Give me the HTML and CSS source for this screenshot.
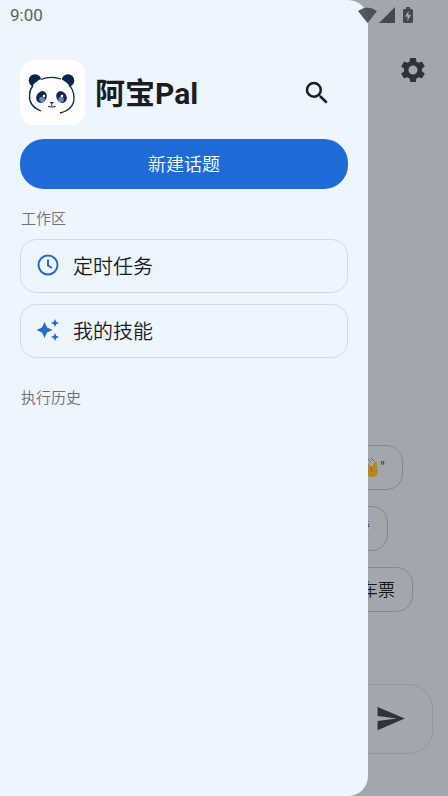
FILE: index.html
```html
<!DOCTYPE html>
<html lang="zh-CN">
<head>
<meta charset="utf-8">
<meta name="viewport" content="width=device-width, initial-scale=1">
<title>阿宝Pal</title>
<link rel="stylesheet" href="styles.css">
</head>
<body>
<div class="app">
  <main class="chat">
    <header class="chat-header">
      <button class="icon-button" type="button" aria-label="设置">
        <svg width="30" height="30" viewBox="0 0 24 24" fill="currentColor"><path d="M19.14 12.94c.04-.3.06-.61.06-.94 0-.32-.02-.64-.07-.94l2.03-1.58c.18-.14.23-.41.12-.61l-1.92-3.32c-.12-.22-.37-.29-.59-.22l-2.39.96c-.5-.38-1.03-.7-1.62-.94l-.36-2.54c-.04-.24-.24-.41-.48-.41h-3.84c-.24 0-.43.17-.47.41l-.36 2.54c-.59.24-1.13.57-1.62.94l-2.39-.96c-.22-.08-.47 0-.59.22L2.74 8.87c-.12.21-.08.47.12.61l2.03 1.58c-.05.3-.09.63-.09.94s.02.64.07.94l-2.03 1.58c-.18.14-.23.41-.12.61l1.92 3.32c.12.22.37.29.59.22l2.39-.96c.5.38 1.03.7 1.62.94l.36 2.54c.05.24.24.41.48.41h3.84c.24 0 .44-.17.47-.41l.36-2.54c.59-.24 1.13-.56 1.62-.94l2.39.96c.22.08.47 0 .59-.22l1.92-3.32c.12-.22.07-.47-.12-.61l-2.01-1.58zM12 15.6A3.6 3.6 0 1 1 12 8.4a3.6 3.6 0 0 1 0 7.2z"/></svg>
      </button>
    </header>
    <div class="suggestions">
      <button class="chip chip-greeting" type="button" aria-label="问候">
        <svg width="20" height="22" viewBox="0 0 20 22"><path d="M1 9L8 7L12 12L14 7Q15 5 17 6L17 11L18 15Q18 21 12 21Q5 20 1 14Z" fill="#b88620"/><path d="M11 10L12 16" stroke="#a25a1c" fill="none"/><path d="M8 3L11 6M11 2L14 5" stroke="#6a6c6e" fill="none"/></svg>"
      </button>
      <button class="chip chip-praise" type="button">赞</button>
      <button class="chip chip-ticket" type="button">车票</button>
    </div>
    <div class="composer">
      <button class="icon-button" type="button" aria-label="发送">
        <svg width="31" height="31" viewBox="0 0 24 24" fill="currentColor"><path d="M2.01 21L23 12 2.01 3 2 10l15 2-15 2z"/></svg>
      </button>
    </div>
  </main>

  <aside class="drawer">
    <header class="brand">
      <svg class="logo" viewBox="0 0 65 65">
        <rect width="65" height="65" rx="14" fill="#fff"/>
        <circle cx="15" cy="20.500" r="6.300" fill="#07244d"/><circle cx="48" cy="20.500" r="6.300" fill="#07244d"/>
        <path d="M21 51C11 47 9 41 9.500 35C10 24 20 17 31 17C43 17 54 26 54 38C54 46 48 51 40 53Z" fill="#fff"/>
        <path d="M21 51C11 47 9 41 9.500 35C9.700 31 11 28 13 25.500M21 19.500Q31 15.500 41 19M49 25C52 28 54 33 54 38C54 46 48 51 40 53" fill="none" stroke="#10224b" stroke-width="1.300"/>
        <ellipse cx="21.500" cy="37" rx="5" ry="6.200" transform="rotate(30 21.500 37)" fill="#122750"/><ellipse cx="41.500" cy="37" rx="5" ry="6.200" transform="rotate(-30 41.500 37)" fill="#122750"/>
        <circle cx="22" cy="39.500" r="2.800" fill="#568fc4"/><circle cx="41" cy="39.500" r="2.800" fill="#568fc4"/>
        <circle cx="24" cy="36" r="1.300" fill="#fff"/><circle cx="42" cy="36" r="1.300" fill="#fff"/>
        <path d="M29.500 42h4.500l-2.200 2.200zM31.400 44h.8v2.500h-.8z" fill="#10224b"/><path d="M28 46.500q3.700 1 7.500 0" fill="none" stroke="#10224b"/>
      </svg>
      <h1>阿宝Pal</h1>
      <button class="icon-button" type="button" aria-label="搜索">
        <svg width="30" height="30" viewBox="0 0 24 24" fill="currentColor"><path d="M15.5 14h-.79l-.28-.27A6.471 6.471 0 0 0 16 9.500 6.500 6.500 0 1 0 9.500 16c1.610 0 3.090-.59 4.230-1.570l.27.28v.79l5 4.990L20.490 19zM9.500 14a4.500 4.500 0 1 1 0-9 4.500 4.500 0 0 1 0 9z"/></svg>
      </button>
    </header>
    <button class="new-topic" type="button">新建话题</button>
    <h2>工作区</h2>
    <nav class="workspace">
      <a href="#tasks"><svg width="24" height="24" viewBox="0 0 24 24" fill="none" stroke="currentColor" stroke-width="2"><circle cx="12" cy="12" r="9.500"/><path d="M12 6.500V12.500L16 15"/></svg>定时任务</a>
      <a href="#skills"><svg width="24" height="24" viewBox="0 0 24 24" fill="currentColor"><path d="M8.500 4L11 9.500L16.500 12L11 14.500L8.500 20L6 14.500L.5 12L6 9.500ZM19 1L20.200 3.800L23 5L20.200 6.200L19 9L17.800 6.200L15 5L17.800 3.800ZM19 15L20.200 17.800L23 19L20.200 20.200L19 23L17.800 20.200L15 19L17.800 17.800Z"/></svg>我的技能</a>
    </nav>
    <h2 class="history-title">执行历史</h2>
  </aside>

  <div class="status-bar">
    <time>9:00</time>
    <div class="status-icons">
      <svg class="wifi" width="19" height="16" viewBox="0 0 19 16"><path d="M0 4Q9.500-3 19 4L9.500 16Z"/></svg>
      <svg class="signal" width="16" height="16" viewBox="0 0 16 16"><path d="M16 0V16H0Z"/></svg>
      <svg class="battery" width="10" height="16" viewBox="0 0 10 16"><path fill-rule="evenodd" d="M3 0H7V2H9L10 3V15L9 16H1L0 15V3L1 2H3ZM5.500 4L2 9.500H4.500V14L8 8H5.500Z"/></svg>
    </div>
  </div>
</div>
</body>
</html>
```
FILE: styles.css
```css
* { box-sizing: border-box; }

body {
  margin: 0;
  font-family: Roboto, "Noto Sans CJK SC", sans-serif;
  font-weight: 350;
  color: #191c22;
}

button { font: inherit; color: inherit; border: 0; background: none; padding: 0; }
svg { display: block; flex: none; }
h1, h2 { margin: 0; }

.app { position: relative; min-height: 100vh; overflow: hidden; background: #a2a7ae; }

.status-bar {
  position: absolute;
  inset: 0 0 auto;
  height: 30px;
  padding: 0 35px 0 10px;
  display: flex;
  align-items: center;
  justify-content: space-between;
  font-size: 17px;
  font-weight: 400;
  color: #5c6066;
}
.status-icons { display: flex; fill: #45484c; }
.wifi { opacity: 0.9; }
.signal { margin-left: 2px; }
.battery { margin-left: 8px; }

.icon-button { display: grid; place-items: center; width: 48px; height: 48px; }

.chat { min-height: 100vh; display: flex; flex-direction: column; color: #303237; }
.chat-header { display: flex; justify-content: flex-end; padding: 46px 11px 0; }
.suggestions {
  margin-top: auto;
  padding-left: 16px;
  display: flex;
  flex-direction: column;
  gap: 16px;
}
.chip {
  height: 45px;
  padding: 0 17px 2px;
  display: flex;
  align-items: center;
  justify-content: flex-end;
  border: 1px solid #85888c;
  border-radius: 16px;
  font-size: 17px;
  color: #13171d;
}
.chip-greeting { margin-right: 45px; }
.chip-praise { margin-right: 60px; }
.chip-ticket { margin-right: 35px; }
.composer {
  height: 70px;
  margin: 72px 15px 42px;
  padding: 0 18px 2px 0;
  display: flex;
  align-items: center;
  justify-content: flex-end;
  border: 1px solid #92969c;
  border-radius: 24px;
}

.drawer {
  position: absolute;
  inset: 0 80px 0 0;
  padding: 60px 20px 20px;
  background: #edf5ff;
  border-radius: 0 20px 20px 0;
}
.brand { display: flex; align-items: center; padding-right: 7px; }
.brand .icon-button { margin-left: auto; }
.logo { width: 65px; height: 65px; }
h1 { margin-left: 10px; padding-top: 2px; font-size: 30px; line-height: 40px; font-weight: 700; }
.new-topic {
  width: 100%;
  height: 50px;
  margin-top: 14px;
  padding-bottom: 2px;
  border-radius: 24px;
  background: #1e6bd8;
  color: #fff;
  font-size: 18px;
}
h2 { margin-top: 19px; padding-left: 1px; font-size: 15px; line-height: 22px; font-weight: 350; color: #6c707b; }
.workspace { margin-top: 9px; display: grid; gap: 11px; }
.workspace a {
  height: 54px;
  padding: 0 15px 2px;
  display: flex;
  align-items: center;
  gap: 13px;
  border: 1px solid #d2dae7;
  border-radius: 16px;
  font-size: 20px;
  color: #191c22;
  text-decoration: none;
}
.workspace svg { color: #256bca; }
.history-title { margin-top: 29px; }
```
